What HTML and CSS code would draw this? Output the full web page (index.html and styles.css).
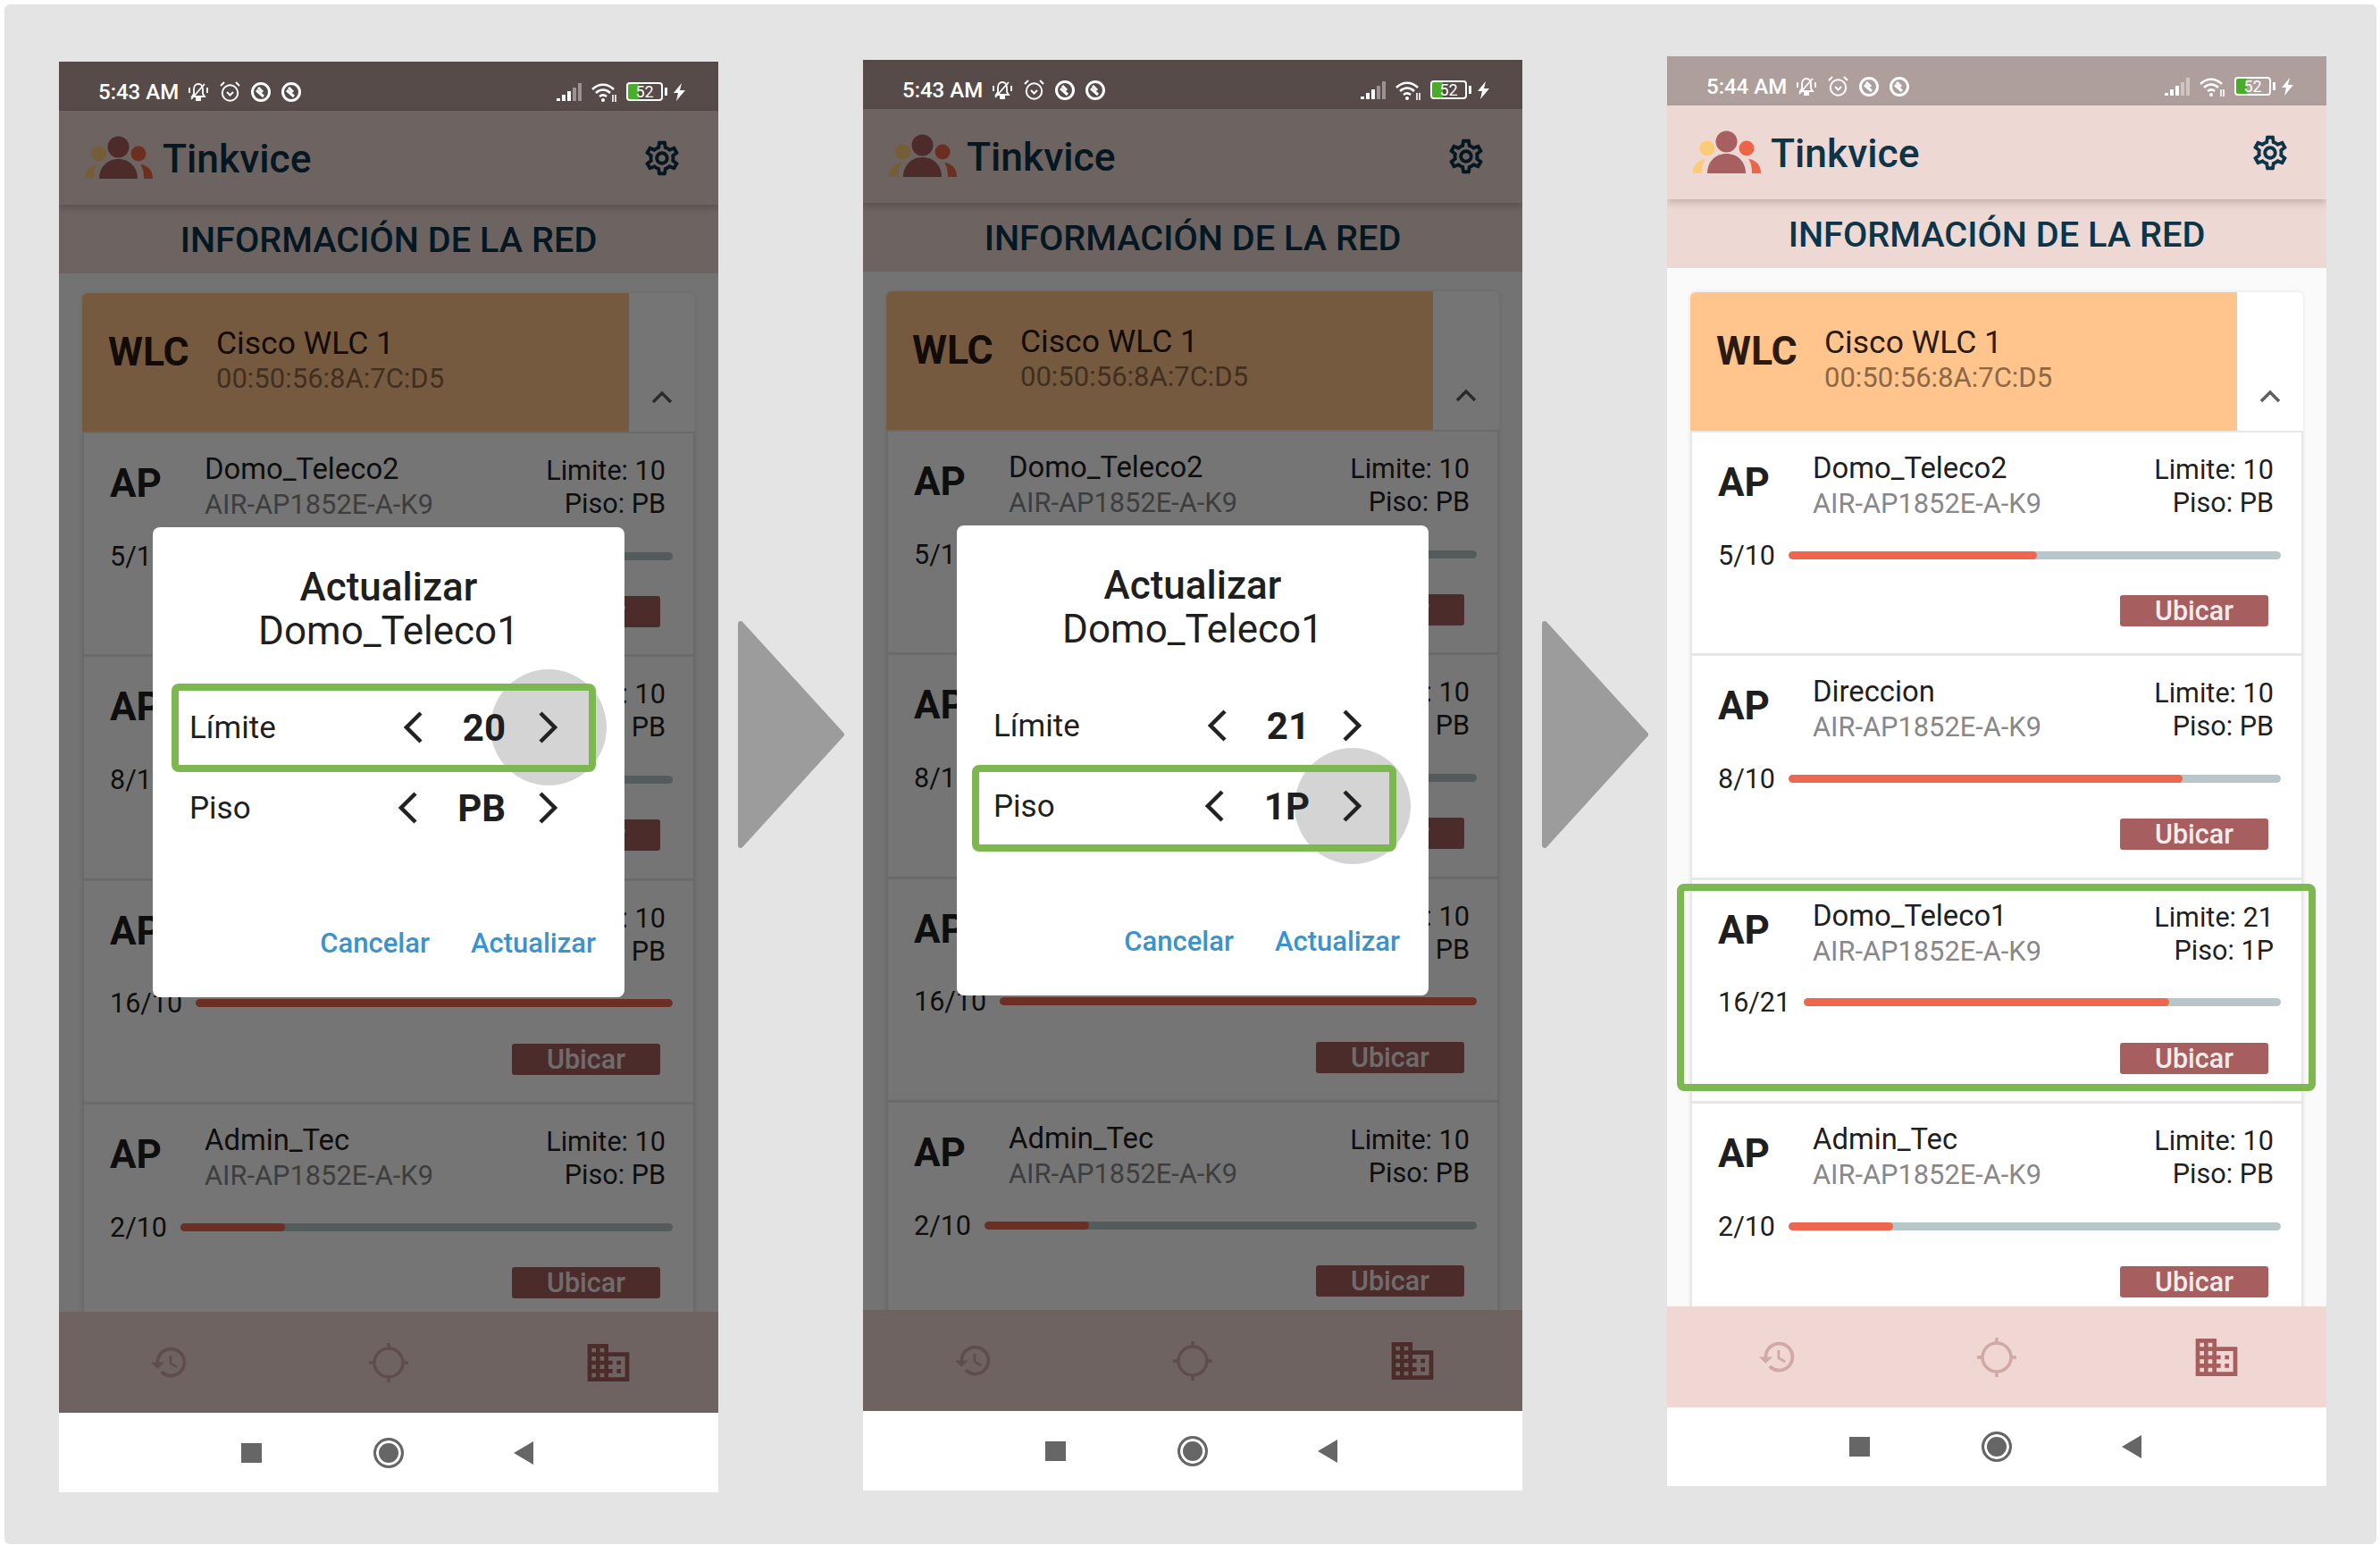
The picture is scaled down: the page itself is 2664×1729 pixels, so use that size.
FILE: index.html
```html
<!DOCTYPE html>
<html lang="en">

<head>
    <meta charset="UTF-8">
    <meta name="viewport" content="width=device-width, initial-scale=1.0">
    <title>Tinkvice - Actualizar AP</title>
    <link rel="stylesheet" href="styles.css">
</head>

<body>
    <svg class="defs" aria-hidden="true">
        <symbol id="i-bell" viewBox="0 0 24 20">
            <path d="M12 1c3 0 5 2.500 5 6v5l2 3H5l2-3V7c0-3.500 2-6 5-6zM10 17h4v2h-4zM4 18L19 1M2 5v6M22 5v6" fill="none" stroke="currentColor" stroke-width="1.800" />
        </symbol>
        <symbol id="i-clock" viewBox="0 0 23 23">
            <circle cx="11.500" cy="13" r="8.700" fill="none" stroke="currentColor" stroke-width="2" />
            <path d="M1 5l4-4M22 5l-4-4M8 12l3.500 3.500L15 12" fill="none" stroke="currentColor" stroke-width="2" />
        </symbol>
        <symbol id="i-ring" viewBox="0 0 22 22">
            <circle cx="11" cy="11" r="9.500" fill="none" stroke="currentColor" stroke-width="3" />
            <path d="M6 9l8 7M8 6l5 5" fill="none" stroke="currentColor" stroke-width="3" />
        </symbol>
        <symbol id="i-signal" viewBox="0 0 29 20">
            <path d="M1 17h4v3H1zM7 13h4v7H7zM13 9h4v11h-4z" fill="currentColor" />
            <path d="M19 5h4v15h-4zM25 0h4v20h-4z" fill="currentColor" opacity=".4" />
        </symbol>
        <symbol id="i-wifi" viewBox="0 0 30 22">
            <path d="M2 8c7-7 17-7 24 0M6 12c5-4.500 11-4.500 16 0M10 16c2.500-2 5.500-2 8 0" fill="none" stroke="currentColor" stroke-width="2.600" />
            <circle cx="14" cy="20" r="2" fill="currentColor" />
            <path d="M25 14v8M28 14v8" stroke="currentColor" stroke-width="1.600" />
        </symbol>
        <symbol id="i-bolt" viewBox="0 0 13 20">
            <path d="M9 0L0 11h5l-2 9 10-12H7z" fill="currentColor" />
        </symbol>
        <symbol id="i-logo" viewBox="0 0 76 50">
            <circle cx="15.700" cy="20" r="8.500" fill="#fccb78" />
            <path d="M0 48c0-9 5-15 14-16-3 4-4 9-4 16z" fill="#fccb78" />
            <circle cx="60" cy="20" r="8.500" fill="#ec6548" />
            <path d="M76 48c0-9-5-15-14-16 3 4 4 9 4 16z" fill="#ec6548" />
            <circle cx="37.500" cy="12.500" r="12" fill="#a85f5f" />
            <path d="M16 48c0-13 9-22 21.500-22S59 35 59 48z" fill="#a85f5f" />
        </symbol>
        <symbol id="i-gear" viewBox="0 0 24 24">
            <path fill="currentColor" d="M19.430 12.980c.04-.32.07-.64.07-.98 0-.34-.03-.66-.07-.98l2.110-1.650c.19-.15.24-.42.12-.64l-2-3.460c-.09-.16-.26-.25-.44-.25-.06 0-.12.01-.17.03l-2.490 1c-.52-.4-1.080-.73-1.690-.98l-.38-2.650C14.460 2.180 14.250 2 14 2h-4c-.25 0-.46.18-.49.42l-.38 2.650c-.61.25-1.170.59-1.690.98l-2.490-1c-.06-.02-.12-.03-.18-.03-.17 0-.34.09-.43.25l-2 3.460c-.13.22-.07.49.12.64l2.110 1.650c-.04.32-.07.65-.07.98 0 .33.03.66.07.98l-2.110 1.650c-.19.15-.24.42-.12.64l2 3.460c.09.16.26.25.44.25.06 0 .12-.01.17-.03l2.490-1c.52.4 1.080.73 1.690.98l.38 2.650c.03.24.24.42.49.42h4c.25 0 .46-.18.49-.42l.38-2.650c.61-.25 1.170-.59 1.690-.98l2.490 1c.06.02.12.03.18.03.17 0 .34-.09.43-.25l2-3.460c.12-.22.07-.49-.12-.64l-2.110-1.650zm-1.980-1.710c.04.31.05.52.05.73 0 .21-.02.43-.05.73l-.14 1.130.89.7 1.080.84-.7 1.210-1.270-.51-1.040-.42-.9.68c-.43.32-.84.56-1.250.73l-1.060.43-.16 1.130-.2 1.350h-1.400l-.19-1.350-.16-1.130-1.060-.43c-.43-.18-.83-.41-1.230-.71l-.91-.7-1.060.43-1.270.51-.7-1.210 1.080-.84.89-.7-.14-1.130c-.03-.31-.05-.54-.05-.74s.02-.43.05-.73l.14-1.130-.89-.7-1.080-.84.7-1.210 1.270.51 1.040.42.9-.68c.43-.32.84-.56 1.250-.73l1.060-.43.16-1.130.2-1.350h1.390l.19 1.350.16 1.130 1.060.43c.43.18.83.41 1.230.71l.91.7 1.060-.43 1.270-.51.7 1.210-1.070.85-.89.7.14 1.130zM12 8c-2.210 0-4 1.790-4 4s1.790 4 4 4 4-1.790 4-4-1.790-4-4-4zm0 6c-1.100 0-2-.9-2-2s.9-2 2-2 2 .9 2 2-.9 2-2 2z" />
        </symbol>
        <symbol id="i-history" viewBox="0 0 24 24">
            <path fill="currentColor" d="M13 3a9 9 0 0 0-9 9H1l3.890 3.890.07.14L9 12H6c0-3.870 3.130-7 7-7s7 3.130 7 7-3.130 7-7 7c-1.930 0-3.680-.79-4.940-2.060l-1.420 1.420A8.954 8.954 0 0 0 13 21a9 9 0 0 0 0-18zm-1 5v5l4.280 2.540.72-1.210-3.500-2.080V8H12z" />
        </symbol>
        <symbol id="i-target" viewBox="0 0 44 44">
            <circle cx="22" cy="22" r="16" fill="none" stroke="currentColor" stroke-width="3.500" />
            <path d="M22 0v6M22 38v6M0 22h6M38 22h6" stroke="currentColor" stroke-width="3.500" />
        </symbol>
        <symbol id="i-domain" viewBox="0 0 24 24">
            <path fill="currentColor" d="M12 7V3H2v18h20V7H12zM6 19H4v-2h2v2zm0-4H4v-2h2v2zm0-4H4V9h2v2zm0-4H4V5h2v2zm4 12H8v-2h2v2zm0-4H8v-2h2v2zm0-4H8V9h2v2zm0-4H8V5h2v2zm10 12h-8v-2h2v-2h-2v-2h2v-2h-2V9h8v10zm-2-8h-2v2h2v-2zm0 4h-2v2h2v-2z" />
        </symbol>
        <symbol id="i-prev" viewBox="0 0 22 36">
            <path d="M19 2L3 18l16 16" fill="none" stroke="currentColor" stroke-width="4.500" />
        </symbol>
        <symbol id="i-next" viewBox="0 0 22 36">
            <path d="M3 2l16 16L3 34" fill="none" stroke="currentColor" stroke-width="4.500" />
        </symbol>
        <symbol id="i-up" viewBox="0 0 24 16">
            <path d="M2 14L12 4l10 10" fill="none" stroke="currentColor" stroke-width="3.500" />
        </symbol>
    </svg>

    <div class="frame">

        <!-- paso 1: limite -->
        <div class="phone phone-first">
            <div class="status-bar">
                <span class="clock">5:43 AM</span>
                <svg class="st-bell"><use href="#i-bell" /></svg>
                <svg class="st-clock"><use href="#i-clock" /></svg>
                <svg class="st-ring"><use href="#i-ring" /></svg>
                <svg class="st-ring"><use href="#i-ring" /></svg>
                <span class="status-space"></span>
                <svg class="st-signal"><use href="#i-signal" /></svg>
                <svg class="st-wifi"><use href="#i-wifi" /></svg>
                <span class="battery">52</span>
                <svg class="st-bolt"><use href="#i-bolt" /></svg>
            </div>
            <div class="app-bar">
                <svg class="logo"><use href="#i-logo" /></svg>
                <span class="app-name">Tinkvice</span>
                <svg class="gear"><use href="#i-gear" /></svg>
            </div>
            <div class="page-title">INFORMACIÓN DE LA RED</div>
            <div class="content">
                <div class="card">
                    <div class="wlc">
                        <div class="wlc-head">
                            <span class="wlc-tag">WLC</span>
                            <div>
                                <div class="wlc-name">Cisco WLC 1</div>
                                <div class="wlc-mac">00:50:56:8A:7C:D5</div>
                            </div>
                        </div>
                        <div class="wlc-toggle"><svg class="up"><use href="#i-up" /></svg></div>
                    </div>
                    <div class="ap">
                        <div class="ap-top">
                            <span class="ap-tag">AP</span>
                            <div class="ap-info"><div class="ap-name">Domo_Teleco2</div><div class="ap-model">AIR-AP1852E-A-K9</div></div>
                            <div class="ap-limits"><div>Limite: 10</div><div>Piso: PB</div></div>
                        </div>
                        <div class="ap-load"><span class="count">5/10</span><div class="track"><div class="fill" style="width: 50.500%"></div></div></div>
                        <div class="ap-foot"><span class="locate">Ubicar</span></div>
                    </div>
                    <div class="ap">
                        <div class="ap-top">
                            <span class="ap-tag">AP</span>
                            <div class="ap-info"><div class="ap-name">Direccion</div><div class="ap-model">AIR-AP1852E-A-K9</div></div>
                            <div class="ap-limits"><div>Limite: 10</div><div>Piso: PB</div></div>
                        </div>
                        <div class="ap-load"><span class="count">8/10</span><div class="track"><div class="fill" style="width: 80%"></div></div></div>
                        <div class="ap-foot"><span class="locate">Ubicar</span></div>
                    </div>
                    <div class="ap">
                        <div class="ap-top">
                            <span class="ap-tag">AP</span>
                            <div class="ap-info"><div class="ap-name">Domo_Teleco1</div><div class="ap-model">AIR-AP1852E-A-K9</div></div>
                            <div class="ap-limits"><div>Limite: 10</div><div>Piso: PB</div></div>
                        </div>
                        <div class="ap-load"><span class="count">16/10</span><div class="track"><div class="fill" style="width: 100%"></div></div></div>
                        <div class="ap-foot"><span class="locate">Ubicar</span></div>
                    </div>
                    <div class="ap">
                        <div class="ap-top">
                            <span class="ap-tag">AP</span>
                            <div class="ap-info"><div class="ap-name">Admin_Tec</div><div class="ap-model">AIR-AP1852E-A-K9</div></div>
                            <div class="ap-limits"><div>Limite: 10</div><div>Piso: PB</div></div>
                        </div>
                        <div class="ap-load"><span class="count">2/10</span><div class="track"><div class="fill" style="width: 21.300%"></div></div></div>
                        <div class="ap-foot"><span class="locate">Ubicar</span></div>
                    </div>
                </div>
            </div>
            <div class="tab-bar">
                <svg class="tab-history"><use href="#i-history" /></svg>
                <svg class="tab-target"><use href="#i-target" /></svg>
                <svg class="tab-domain"><use href="#i-domain" /></svg>
            </div>
            <div class="nav-bar">
                <span class="nav-square"></span>
                <span class="nav-home"></span>
                <span class="nav-back"></span>
            </div>
            <div class="scrim"></div>
            <div class="dialog">
                <div class="touch touch-limit"></div>
                <div class="dialog-title">Actualizar</div>
                <div class="dialog-name">Domo_Teleco1</div>
                <div class="field">
                    <span class="field-label">Límite</span>
                    <svg class="chev"><use href="#i-prev" /></svg>
                    <span class="field-value">20</span>
                    <svg class="chev chev-next"><use href="#i-next" /></svg>
                </div>
                <div class="field">
                    <span class="field-label">Piso</span>
                    <svg class="chev"><use href="#i-prev" /></svg>
                    <span class="field-value">PB</span>
                    <svg class="chev chev-next"><use href="#i-next" /></svg>
                </div>
                <div class="dialog-actions"><span>Cancelar</span><span>Actualizar</span></div>
                <div class="mark mark-limit"></div>
            </div>
        </div>

        <svg class="step-arrow" viewBox="0 0 119 255"><path d="M3 3L116 127 3 251z" /></svg>

        <!-- paso 2: piso -->
        <div class="phone phone-second">
            <div class="status-bar">
                <span class="clock">5:43 AM</span>
                <svg class="st-bell"><use href="#i-bell" /></svg>
                <svg class="st-clock"><use href="#i-clock" /></svg>
                <svg class="st-ring"><use href="#i-ring" /></svg>
                <svg class="st-ring"><use href="#i-ring" /></svg>
                <span class="status-space"></span>
                <svg class="st-signal"><use href="#i-signal" /></svg>
                <svg class="st-wifi"><use href="#i-wifi" /></svg>
                <span class="battery">52</span>
                <svg class="st-bolt"><use href="#i-bolt" /></svg>
            </div>
            <div class="app-bar">
                <svg class="logo"><use href="#i-logo" /></svg>
                <span class="app-name">Tinkvice</span>
                <svg class="gear"><use href="#i-gear" /></svg>
            </div>
            <div class="page-title">INFORMACIÓN DE LA RED</div>
            <div class="content">
                <div class="card">
                    <div class="wlc">
                        <div class="wlc-head">
                            <span class="wlc-tag">WLC</span>
                            <div>
                                <div class="wlc-name">Cisco WLC 1</div>
                                <div class="wlc-mac">00:50:56:8A:7C:D5</div>
                            </div>
                        </div>
                        <div class="wlc-toggle"><svg class="up"><use href="#i-up" /></svg></div>
                    </div>
                    <div class="ap">
                        <div class="ap-top">
                            <span class="ap-tag">AP</span>
                            <div class="ap-info"><div class="ap-name">Domo_Teleco2</div><div class="ap-model">AIR-AP1852E-A-K9</div></div>
                            <div class="ap-limits"><div>Limite: 10</div><div>Piso: PB</div></div>
                        </div>
                        <div class="ap-load"><span class="count">5/10</span><div class="track"><div class="fill" style="width: 50.500%"></div></div></div>
                        <div class="ap-foot"><span class="locate">Ubicar</span></div>
                    </div>
                    <div class="ap">
                        <div class="ap-top">
                            <span class="ap-tag">AP</span>
                            <div class="ap-info"><div class="ap-name">Direccion</div><div class="ap-model">AIR-AP1852E-A-K9</div></div>
                            <div class="ap-limits"><div>Limite: 10</div><div>Piso: PB</div></div>
                        </div>
                        <div class="ap-load"><span class="count">8/10</span><div class="track"><div class="fill" style="width: 80%"></div></div></div>
                        <div class="ap-foot"><span class="locate">Ubicar</span></div>
                    </div>
                    <div class="ap">
                        <div class="ap-top">
                            <span class="ap-tag">AP</span>
                            <div class="ap-info"><div class="ap-name">Domo_Teleco1</div><div class="ap-model">AIR-AP1852E-A-K9</div></div>
                            <div class="ap-limits"><div>Limite: 10</div><div>Piso: PB</div></div>
                        </div>
                        <div class="ap-load"><span class="count">16/10</span><div class="track"><div class="fill" style="width: 100%"></div></div></div>
                        <div class="ap-foot"><span class="locate">Ubicar</span></div>
                    </div>
                    <div class="ap">
                        <div class="ap-top">
                            <span class="ap-tag">AP</span>
                            <div class="ap-info"><div class="ap-name">Admin_Tec</div><div class="ap-model">AIR-AP1852E-A-K9</div></div>
                            <div class="ap-limits"><div>Limite: 10</div><div>Piso: PB</div></div>
                        </div>
                        <div class="ap-load"><span class="count">2/10</span><div class="track"><div class="fill" style="width: 21.300%"></div></div></div>
                        <div class="ap-foot"><span class="locate">Ubicar</span></div>
                    </div>
                </div>
            </div>
            <div class="tab-bar">
                <svg class="tab-history"><use href="#i-history" /></svg>
                <svg class="tab-target"><use href="#i-target" /></svg>
                <svg class="tab-domain"><use href="#i-domain" /></svg>
            </div>
            <div class="nav-bar">
                <span class="nav-square"></span>
                <span class="nav-home"></span>
                <span class="nav-back"></span>
            </div>
            <div class="scrim"></div>
            <div class="dialog">
                <div class="touch touch-floor"></div>
                <div class="dialog-title">Actualizar</div>
                <div class="dialog-name">Domo_Teleco1</div>
                <div class="field">
                    <span class="field-label">Límite</span>
                    <svg class="chev"><use href="#i-prev" /></svg>
                    <span class="field-value">21</span>
                    <svg class="chev chev-next"><use href="#i-next" /></svg>
                </div>
                <div class="field">
                    <span class="field-label">Piso</span>
                    <svg class="chev"><use href="#i-prev" /></svg>
                    <span class="field-value">1P</span>
                    <svg class="chev chev-next"><use href="#i-next" /></svg>
                </div>
                <div class="dialog-actions"><span>Cancelar</span><span>Actualizar</span></div>
                <div class="mark mark-floor"></div>
            </div>
        </div>

        <svg class="step-arrow" viewBox="0 0 119 255"><path d="M3 3L116 127 3 251z" /></svg>

        <!-- paso 3: resultado -->
        <div class="phone phone-third">
            <div class="status-bar">
                <span class="clock">5:44 AM</span>
                <svg class="st-bell"><use href="#i-bell" /></svg>
                <svg class="st-clock"><use href="#i-clock" /></svg>
                <svg class="st-ring"><use href="#i-ring" /></svg>
                <svg class="st-ring"><use href="#i-ring" /></svg>
                <span class="status-space"></span>
                <svg class="st-signal"><use href="#i-signal" /></svg>
                <svg class="st-wifi"><use href="#i-wifi" /></svg>
                <span class="battery">52</span>
                <svg class="st-bolt"><use href="#i-bolt" /></svg>
            </div>
            <div class="app-bar">
                <svg class="logo"><use href="#i-logo" /></svg>
                <span class="app-name">Tinkvice</span>
                <svg class="gear"><use href="#i-gear" /></svg>
            </div>
            <div class="page-title">INFORMACIÓN DE LA RED</div>
            <div class="content">
                <div class="card">
                    <div class="wlc">
                        <div class="wlc-head">
                            <span class="wlc-tag">WLC</span>
                            <div>
                                <div class="wlc-name">Cisco WLC 1</div>
                                <div class="wlc-mac">00:50:56:8A:7C:D5</div>
                            </div>
                        </div>
                        <div class="wlc-toggle"><svg class="up"><use href="#i-up" /></svg></div>
                    </div>
                    <div class="ap">
                        <div class="ap-top">
                            <span class="ap-tag">AP</span>
                            <div class="ap-info"><div class="ap-name">Domo_Teleco2</div><div class="ap-model">AIR-AP1852E-A-K9</div></div>
                            <div class="ap-limits"><div>Limite: 10</div><div>Piso: PB</div></div>
                        </div>
                        <div class="ap-load"><span class="count">5/10</span><div class="track"><div class="fill" style="width: 50.500%"></div></div></div>
                        <div class="ap-foot"><span class="locate">Ubicar</span></div>
                    </div>
                    <div class="ap">
                        <div class="ap-top">
                            <span class="ap-tag">AP</span>
                            <div class="ap-info"><div class="ap-name">Direccion</div><div class="ap-model">AIR-AP1852E-A-K9</div></div>
                            <div class="ap-limits"><div>Limite: 10</div><div>Piso: PB</div></div>
                        </div>
                        <div class="ap-load"><span class="count">8/10</span><div class="track"><div class="fill" style="width: 80%"></div></div></div>
                        <div class="ap-foot"><span class="locate">Ubicar</span></div>
                    </div>
                    <div class="ap">
                        <div class="mark mark-row"></div>
                        <div class="ap-top">
                            <span class="ap-tag">AP</span>
                            <div class="ap-info"><div class="ap-name">Domo_Teleco1</div><div class="ap-model">AIR-AP1852E-A-K9</div></div>
                            <div class="ap-limits"><div>Limite: 21</div><div>Piso: 1P</div></div>
                        </div>
                        <div class="ap-load"><span class="count">16/21</span><div class="track"><div class="fill" style="width: 76.500%"></div></div></div>
                        <div class="ap-foot"><span class="locate">Ubicar</span></div>
                    </div>
                    <div class="ap">
                        <div class="ap-top">
                            <span class="ap-tag">AP</span>
                            <div class="ap-info"><div class="ap-name">Admin_Tec</div><div class="ap-model">AIR-AP1852E-A-K9</div></div>
                            <div class="ap-limits"><div>Limite: 10</div><div>Piso: PB</div></div>
                        </div>
                        <div class="ap-load"><span class="count">2/10</span><div class="track"><div class="fill" style="width: 21.300%"></div></div></div>
                        <div class="ap-foot"><span class="locate">Ubicar</span></div>
                    </div>
                </div>
            </div>
            <div class="tab-bar">
                <svg class="tab-history"><use href="#i-history" /></svg>
                <svg class="tab-target"><use href="#i-target" /></svg>
                <svg class="tab-domain"><use href="#i-domain" /></svg>
            </div>
            <div class="nav-bar">
                <span class="nav-square"></span>
                <span class="nav-home"></span>
                <span class="nav-back"></span>
            </div>
        </div>

    </div>
</body>

</html>
```

FILE: styles.css
```css
* {
    box-sizing: border-box;
}

body {
    margin: 0;
    background-color: #fff;
    font-family: Roboto, "Liberation Sans", sans-serif;
    color: #1f1f1f;
}

.defs {
    display: none;
}

.frame {
    display: flex;
    align-items: flex-start;
    gap: 21.5px;
    width: 2655px;
    height: 1723px;
    margin: 5px 0 0 5px;
    padding-left: 61px;
    background-color: #e4e4e4;
    border-radius: 6px;
}

.step-arrow {
    flex: none;
    width: 119px;
    height: 255px;
    margin-top: 690px;
}

.step-arrow path {
    fill: #9c9c9c;
    stroke: #9c9c9c;
    stroke-width: 6;
    stroke-linejoin: round;
}

.phone {
    position: relative;
    display: flex;
    flex-direction: column;
    flex: none;
    width: 738px;
    height: 1601px;
    background-color: #fafafa;
    overflow: hidden;
}

.phone-first {
    margin-top: 64px;
}

.phone-second {
    margin-top: 62px;
}

.phone-third {
    margin-top: 58px;
    height: 1600px;
}

/* status bar */
.status-bar {
    display: flex;
    align-items: center;
    flex: none;
    height: 55px;
    padding: 12px 37px 0 44px;
    background-color: #ae9f9c;
    color: #fff;
}

.phone-first .status-bar,
.phone-second .status-bar {
    background-color: #574b4a;
}

.clock {
    margin-right: 10px;
    font-size: 24px;
    font-weight: 500;
}

.status-bar svg {
    flex: none;
}

.st-bell {
    width: 24px;
    height: 20px;
    margin-right: 12px;
}

.st-clock {
    width: 23px;
    height: 23px;
    margin-right: 12px;
}

.st-ring {
    width: 22px;
    height: 22px;
    margin-right: 12px;
}

.status-space {
    flex: 1;
}

.st-signal {
    width: 29px;
    height: 20px;
    margin-right: 10px;
}

.st-wifi {
    width: 30px;
    height: 22px;
    margin-right: 10px;
}

.battery {
    position: relative;
    flex: none;
    width: 41px;
    height: 21px;
    margin-right: 12px;
    border: 2px solid #fff;
    border-radius: 4px;
    background: linear-gradient(90deg, #4bab2a 0 32%, transparent 32%);
    font-size: 18px;
    line-height: 17px;
    text-align: center;
}

.battery::after {
    content: "";
    position: absolute;
    top: 4px;
    right: -7px;
    width: 3px;
    height: 9px;
    background-color: #fff;
}

.st-bolt {
    width: 13px;
    height: 20px;
}

/* header */
.app-bar {
    position: relative;
    z-index: 1;
    display: flex;
    align-items: center;
    flex: none;
    height: 105px;
    padding: 0 40px 0 29px;
    background-color: #eed8d4;
    box-shadow: 0 4px 8px rgba(0, 0, 0, 0.18);
    color: #0d3447;
}

.logo {
    flex: none;
    width: 76px;
    height: 50px;
    margin-right: 11px;
}

.app-name {
    flex: 1;
    padding-top: 2px;
    font-size: 44.400px;
    font-weight: 500;
}

.gear {
    width: 46px;
    height: 46px;
}

.page-title {
    flex: none;
    height: 77px;
    padding-top: 4px;
    background-color: #eed8d4;
    color: #0d3447;
    font-size: 39.700px;
    font-weight: 500;
    line-height: 72px;
    text-align: center;
}

/* content */
.content {
    flex: none;
    height: 1162px;
    padding: 22px 26px 0;
    overflow: hidden;
}

.phone-third .content {
    padding-top: 27px;
}

.card {
    background-color: #fff;
    border-radius: 6px 6px 0 0;
    box-shadow: 0 0 4px rgba(0, 0, 0, 0.1);
}

.wlc {
    display: flex;
    height: 155px;
}

.wlc-head {
    display: flex;
    width: 612px;
    padding: 36px 0 0 29px;
    background-color: #ffc58d;
    border-top-left-radius: 6px;
}

.wlc-tag {
    width: 121px;
    font-size: 44.500px;
    font-weight: 700;
    line-height: 60px;
    color: #2a1a10;
}

.wlc-name {
    font-size: 35.500px;
    line-height: 40px;
    color: #2a1a10;
}

.wlc-mac {
    font-size: 31px;
    line-height: 40px;
    color: #8e6845;
}

.wlc-toggle {
    flex: 1;
    display: flex;
    align-items: flex-end;
    justify-content: center;
    padding-bottom: 31px;
    color: #5f5f5f;
}

.up {
    width: 24px;
    height: 16px;
}

.ap {
    position: relative;
    height: 250.400px;
    padding: 21px 23px 0 29px;
    border: solid #e6e8e8;
    border-width: 2px 2px 1px;
}

.ap-top {
    display: flex;
    height: 78px;
}

.ap-tag {
    width: 106px;
    font-size: 44px;
    font-weight: 700;
    line-height: 70px;
}

.ap-info {
    flex: 1;
}

.ap-name {
    font-size: 32.800px;
    line-height: 39px;
}

.ap-model {
    font-size: 30.800px;
    line-height: 39px;
    color: #888;
}

.ap-limits {
    margin-right: 8px;
    font-size: 30.600px;
    line-height: 37px;
    text-align: right;
}

.ap-limits div:first-child {
    margin-top: 2px;
}

.ap-load {
    display: flex;
    align-items: center;
    gap: 15px;
    height: 40px;
    margin-top: 18px;
}

.count {
    font-size: 30.500px;
}

.track {
    flex: 1;
    height: 9px;
    background-color: #b7c7c9;
    border-radius: 5px;
    overflow: hidden;
}

.fill {
    height: 100%;
    background-color: #ec6650;
    border-radius: 5px;
}

.ap-foot {
    display: flex;
    justify-content: flex-end;
    margin-top: 25px;
    padding-right: 14px;
}

.locate {
    width: 166px;
    height: 35px;
    background-color: #a75e5e;
    border-radius: 3px;
    color: #f6ecec;
    font-size: 30.500px;
    font-weight: 500;
    line-height: 35px;
    text-align: center;
}

/* bottom */
.tab-bar {
    position: relative;
    z-index: 1;
    display: grid;
    grid-template-columns: repeat(3, 1fr);
    align-items: center;
    justify-items: center;
    flex: none;
    height: 113px;
    background-color: #f0d7d3;
}

.tab-history {
    width: 45px;
    height: 45px;
    color: #d0a8a5;
}

.tab-target {
    width: 44px;
    height: 44px;
    color: #d0a8a5;
}

.tab-domain {
    width: 56px;
    height: 56px;
    color: #a75e5e;
}

.nav-bar {
    display: flex;
    align-items: center;
    justify-content: center;
    flex: 1;
    padding-right: 4px;
    background-color: #fff;
}

.nav-square {
    width: 23px;
    height: 22px;
    margin-right: 125px;
    background-color: #666;
}

.nav-home {
    width: 34px;
    height: 34px;
    margin-right: 123px;
    border: 3px solid #666;
    border-radius: 50%;
    background: #666;
    box-shadow: inset 0 0 0 3px #fff;
}

.nav-back {
    width: 0;
    height: 0;
    border-top: 13px solid transparent;
    border-bottom: 13px solid transparent;
    border-right: 22px solid #666;
}

/* dialog */
.scrim {
    position: absolute;
    z-index: 2;
    top: 55px;
    left: 0;
    right: 0;
    bottom: 89px;
    background-color: rgba(0, 0, 0, 0.54);
}

.dialog {
    position: absolute;
    z-index: 3;
    top: 521px;
    left: 105px;
    width: 528px;
    height: 526px;
    padding-top: 43px;
    background-color: #fff;
    border-radius: 8px;
    text-align: center;
}

.dialog-title {
    font-size: 44px;
    font-weight: 500;
    line-height: 48px;
}

.dialog-name {
    font-size: 44px;
    line-height: 50px;
}

.field {
    position: relative;
    display: flex;
    align-items: center;
    height: 90px;
    padding: 0 75px 0 41px;
}

.dialog-name + .field {
    margin-top: 38px;
}

.field-label {
    flex: 1;
    font-size: 35px;
    text-align: left;
}

.field-value {
    margin: 0 36px 0 44px;
    font-size: 42px;
    font-weight: 700;
}

.chev {
    flex: none;
    width: 22px;
    height: 36px;
    color: #222;
}

.dialog-actions {
    display: flex;
    justify-content: flex-end;
    gap: 46px;
    margin-top: 87px;
    padding-right: 32px;
    color: #3b93cc;
    font-size: 31px;
    font-weight: 500;
    line-height: 40px;
}

.touch {
    position: absolute;
    left: 378px;
    width: 130px;
    height: 130px;
    border-radius: 50%;
    background-color: rgba(0, 0, 0, 0.17);
}

.touch-limit {
    top: 159px;
}

.touch-floor {
    top: 249px;
}

.mark {
    position: absolute;
    z-index: 1;
    border: 8px solid #7cb750;
    border-radius: 8px;
}

.mark-limit {
    top: 175px;
    left: 21px;
    width: 475px;
    height: 99px;
}

.mark-floor {
    top: 268px;
    left: 17px;
    width: 475px;
    height: 97px;
}

.mark-row {
    top: 4px;
    left: -17px;
    right: -16px;
    height: 232px;
}
```
